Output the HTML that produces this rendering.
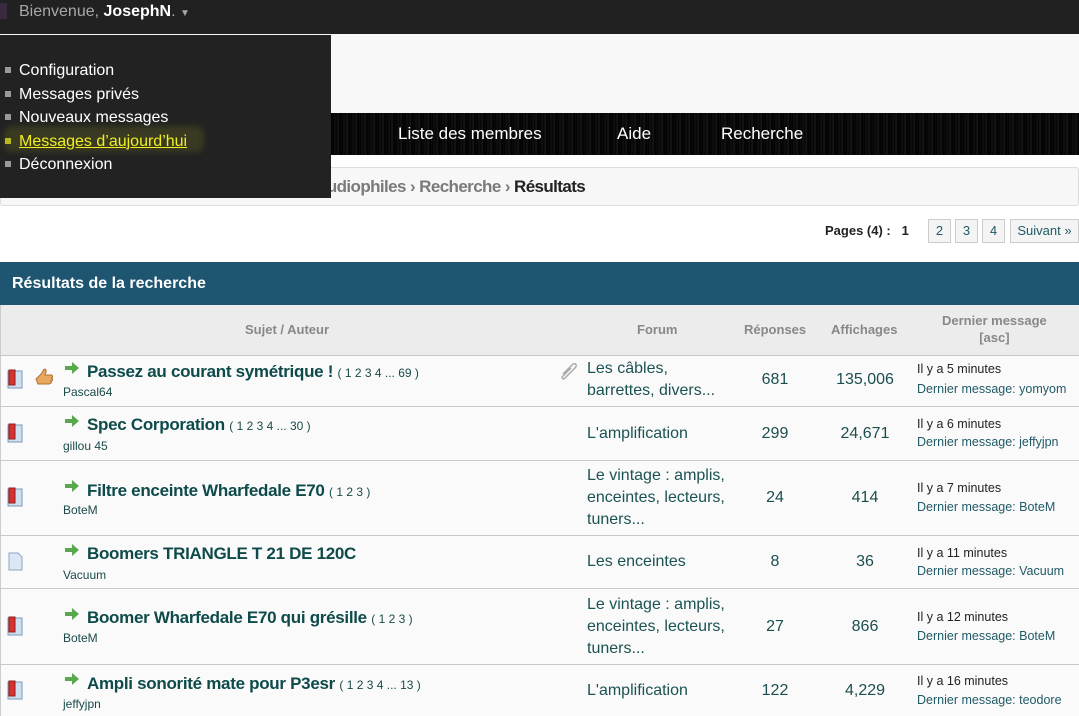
<!DOCTYPE html>
<html><head><meta charset="utf-8"><style>
*{margin:0;padding:0;box-sizing:border-box}
body{width:1079px;height:716px;overflow:hidden;background:#fff;font-family:"Liberation Sans",Tahoma,sans-serif;position:relative}
.a{position:absolute;white-space:nowrap;line-height:20px}
.t{font-weight:bold;font-size:17px;color:#0e4a4a;letter-spacing:-0.3px}
.t small{font-weight:normal;font-size:12px;color:#1a4a4a;letter-spacing:0}
.au{font-size:12px;color:#1a4a4a}
.f{font-size:16px;color:#1b5252;line-height:22px}
.n{font-size:16px;color:#1b4e4e;text-align:center;width:100px}
.l1{font-size:12.5px;color:#222}
.l2{font-size:12.5px;color:#1f5a66}
.row{position:absolute;left:0;width:1079px;background:#fafafa;border-top:1px solid #c8c8c8;border-left:1px solid #ccc}
.pg{position:absolute;top:219px;height:24px;border:1px solid #ccc;background:#f4f4f4;font-size:13px;color:#1f5a66;line-height:22px;text-align:center}
</style></head><body>
<div style="position:absolute;left:0;top:0;width:1079px;height:34px;background:#212121"></div>
<div style="position:absolute;left:0;top:3px;width:7px;height:16px;background:#3a2a40"></div>
<div class="a" style="left:19px;top:2px;font-size:16px;color:#a8a8a8">Bienvenue, <b style="color:#fff">JosephN</b>. <span style="font-size:10px">▼</span></div>
<div style="position:absolute;left:0;top:34px;width:1079px;height:79px;background:#f8f8f8"></div>
<div style="position:absolute;left:0;top:113px;width:1079px;height:42px;background:repeating-linear-gradient(90deg,#000 0,#111 2px,#050505 4px,#1a1a1a 5px,#000 7px,#0c0c0c 9px)"></div>
<div class="a" style="left:398px;top:124px;font-size:17px;color:#fff">Liste des membres</div>
<div class="a" style="left:617px;top:124px;font-size:17px;color:#fff">Aide</div>
<div class="a" style="left:721px;top:124px;font-size:17px;color:#fff">Recherche</div>
<div style="position:absolute;left:0;top:167px;width:1079px;height:39px;background:#f7f7f7;border:1px solid #ddd;border-radius:3px"></div>
<div class="a" style="left:318px;top:177px;font-size:17px;font-weight:bold;color:#7a7a7a;letter-spacing:-0.6px">audiophiles › Recherche › <span style="color:#222">Résultats</span></div>
<div style="position:absolute;left:0;top:35px;width:331px;height:163px;background:#222"></div>
<div style="position:absolute;left:4px;top:126px;width:200px;height:26px;background:#3a3a22;border-radius:8px;filter:blur(3px)"></div>
<div style="position:absolute;left:19px;top:59px;font-size:16px;color:#fff;line-height:23.5px">Configuration<br>Messages privés<br>Nouveaux messages<br><span style="color:#f0f020;text-decoration:underline">Messages d’aujourd’hui</span><br>Déconnexion</div>
<div style="position:absolute;left:5px;top:67px;width:6px;height:6px;background:#999"></div>
<div style="position:absolute;left:5px;top:91px;width:6px;height:6px;background:#999"></div>
<div style="position:absolute;left:5px;top:114px;width:6px;height:6px;background:#999"></div>
<div style="position:absolute;left:5px;top:138px;width:6px;height:6px;background:#b8b820"></div>
<div style="position:absolute;left:5px;top:161px;width:6px;height:6px;background:#999"></div>
<div class="a" style="left:825px;top:221px;font-size:13px;font-weight:bold;color:#222">Pages (4) :&nbsp;&nbsp; 1</div>
<div class="pg" style="left:928px;width:23px">2</div>
<div class="pg" style="left:955px;width:23px">3</div>
<div class="pg" style="left:982px;width:23px">4</div>
<div class="pg" style="left:1010px;width:69px">Suivant »</div>
<div style="position:absolute;left:0;top:262px;width:1079px;height:43px;background:#1e5570"></div>
<div class="a" style="left:12px;top:274px;font-size:16px;font-weight:bold;color:#fff">Résultats de la recherche</div>
<div style="position:absolute;left:0;top:305px;width:1079px;height:50px;background:#ececec;border-left:1px solid #ccc"></div>
<div class="a" style="left:245px;top:320px;font-size:13px;font-weight:bold;color:#888">Sujet / Auteur</div>
<div class="a" style="left:637px;top:320px;font-size:13px;font-weight:bold;color:#888">Forum</div>
<div class="a" style="left:744px;top:320px;font-size:13px;font-weight:bold;color:#888">Réponses</div>
<div class="a" style="left:831px;top:320px;font-size:13px;font-weight:bold;color:#888">Affichages</div>
<div class="a" style="left:942px;top:312px;font-size:13px;font-weight:bold;color:#888;text-align:center;line-height:17px">Dernier message<br>[asc]</div>

<div class="row" style="top:355px;height:51px"></div>
<div class="row" style="top:406px;height:54px"></div>
<div class="row" style="top:460px;height:75px"></div>
<div class="row" style="top:535px;height:53px"></div>
<div class="row" style="top:588px;height:76px"></div>
<div class="row" style="top:664px;height:52px"></div>

<svg style="position:absolute;left:0;top:0" width="1079" height="716">
<defs>
<g id="bk"><rect x="0" y="0" width="14" height="17" fill="#cfe0f0" stroke="#7a9ab8"/><rect x="1" y="-1" width="6" height="15" fill="#d93030" stroke="#902020"/></g>
<g id="ar"><path d="M0 4h7v-4l7 6-7 6v-4h-7z" fill="#5aa84e"/></g>
</defs>
<use href="#bk" x="8" y="371"/><use href="#bk" x="8" y="425"/><use href="#bk" x="8" y="489"/><use href="#bk" x="8" y="618"/><use href="#bk" x="8" y="682"/>
<path d="M9 553h9l4 4v13h-13z" fill="#dbe7f4" stroke="#8aa6c4"/>
<path d="M36 379c2-2 5-4 7-8 1-3 4-2 3 1l-1 3h6c2 0 2 3 0 3 2 0 2 3 0 3 1 1 0 3-2 3h-11z" fill="#e8a860" stroke="#b07030"/>
<use href="#ar" x="65" y="362"/><use href="#ar" x="65" y="415"/><use href="#ar" x="65" y="480"/><use href="#ar" x="65" y="544"/><use href="#ar" x="65" y="608"/><use href="#ar" x="65" y="673"/>
<path d="M563 374l9-9c3-3 6 0 3 3l-10 10c-2 2-4 0-2-2l8-8" fill="none" stroke="#aaa" stroke-width="1.5"/>
</svg>

<div class="a t" style="left:87px;top:362px">Passez au courant symétrique ! <small>( 1 2 3 4 ... 69 )</small></div>
<div class="a au" style="left:63px;top:382px">Pascal64</div>
<div class="a t" style="left:87px;top:415px">Spec Corporation <small>( 1 2 3 4 ... 30 )</small></div>
<div class="a au" style="left:63px;top:436px">gillou 45</div>
<div class="a t" style="left:87px;top:481px">Filtre enceinte Wharfedale E70 <small>( 1 2 3 )</small></div>
<div class="a au" style="left:63px;top:500px">BoteM</div>
<div class="a t" style="left:87px;top:544px">Boomers TRIANGLE T 21 DE 120C</div>
<div class="a au" style="left:63px;top:565px">Vacuum</div>
<div class="a t" style="left:87px;top:608px">Boomer Wharfedale E70 qui grésille <small>( 1 2 3 )</small></div>
<div class="a au" style="left:63px;top:628px">BoteM</div>
<div class="a t" style="left:87px;top:674px">Ampli sonorité mate pour P3esr <small>( 1 2 3 4 ... 13 )</small></div>
<div class="a au" style="left:63px;top:694px">jeffyjpn</div>

<div class="a f" style="left:587px;top:358px">Les câbles,<br>barrettes, divers...</div>
<div class="a f" style="left:587px;top:423px">L'amplification</div>
<div class="a f" style="left:587px;top:465px">Le vintage : amplis,<br>enceintes, lecteurs,<br>tuners...</div>
<div class="a f" style="left:587px;top:551px">Les enceintes</div>
<div class="a f" style="left:587px;top:594px">Le vintage : amplis,<br>enceintes, lecteurs,<br>tuners...</div>
<div class="a f" style="left:587px;top:680px">L'amplification</div>

<div class="a n" style="left:725px;top:370px">681</div><div class="a n" style="left:815px;top:370px">135,006</div>
<div class="a n" style="left:725px;top:424px">299</div><div class="a n" style="left:815px;top:424px">24,671</div>
<div class="a n" style="left:725px;top:488px">24</div><div class="a n" style="left:815px;top:488px">414</div>
<div class="a n" style="left:725px;top:552px">8</div><div class="a n" style="left:815px;top:552px">36</div>
<div class="a n" style="left:725px;top:617px">27</div><div class="a n" style="left:815px;top:617px">866</div>
<div class="a n" style="left:725px;top:681px">122</div><div class="a n" style="left:815px;top:681px">4,229</div>

<div class="a l1" style="left:917px;top:359px">Il y a 5 minutes</div><div class="a l2" style="left:917px;top:379px">Dernier message: yomyom</div>
<div class="a l1" style="left:917px;top:414px">Il y a 6 minutes</div><div class="a l2" style="left:917px;top:432px">Dernier message: jeffyjpn</div>
<div class="a l1" style="left:917px;top:478px">Il y a 7 minutes</div><div class="a l2" style="left:917px;top:497px">Dernier message: BoteM</div>
<div class="a l1" style="left:917px;top:543px">Il y a 11 minutes</div><div class="a l2" style="left:917px;top:561px">Dernier message: Vacuum</div>
<div class="a l1" style="left:917px;top:607px">Il y a 12 minutes</div><div class="a l2" style="left:917px;top:626px">Dernier message: BoteM</div>
<div class="a l1" style="left:917px;top:671px">Il y a 16 minutes</div><div class="a l2" style="left:917px;top:690px">Dernier message: teodore</div>
</body></html>
